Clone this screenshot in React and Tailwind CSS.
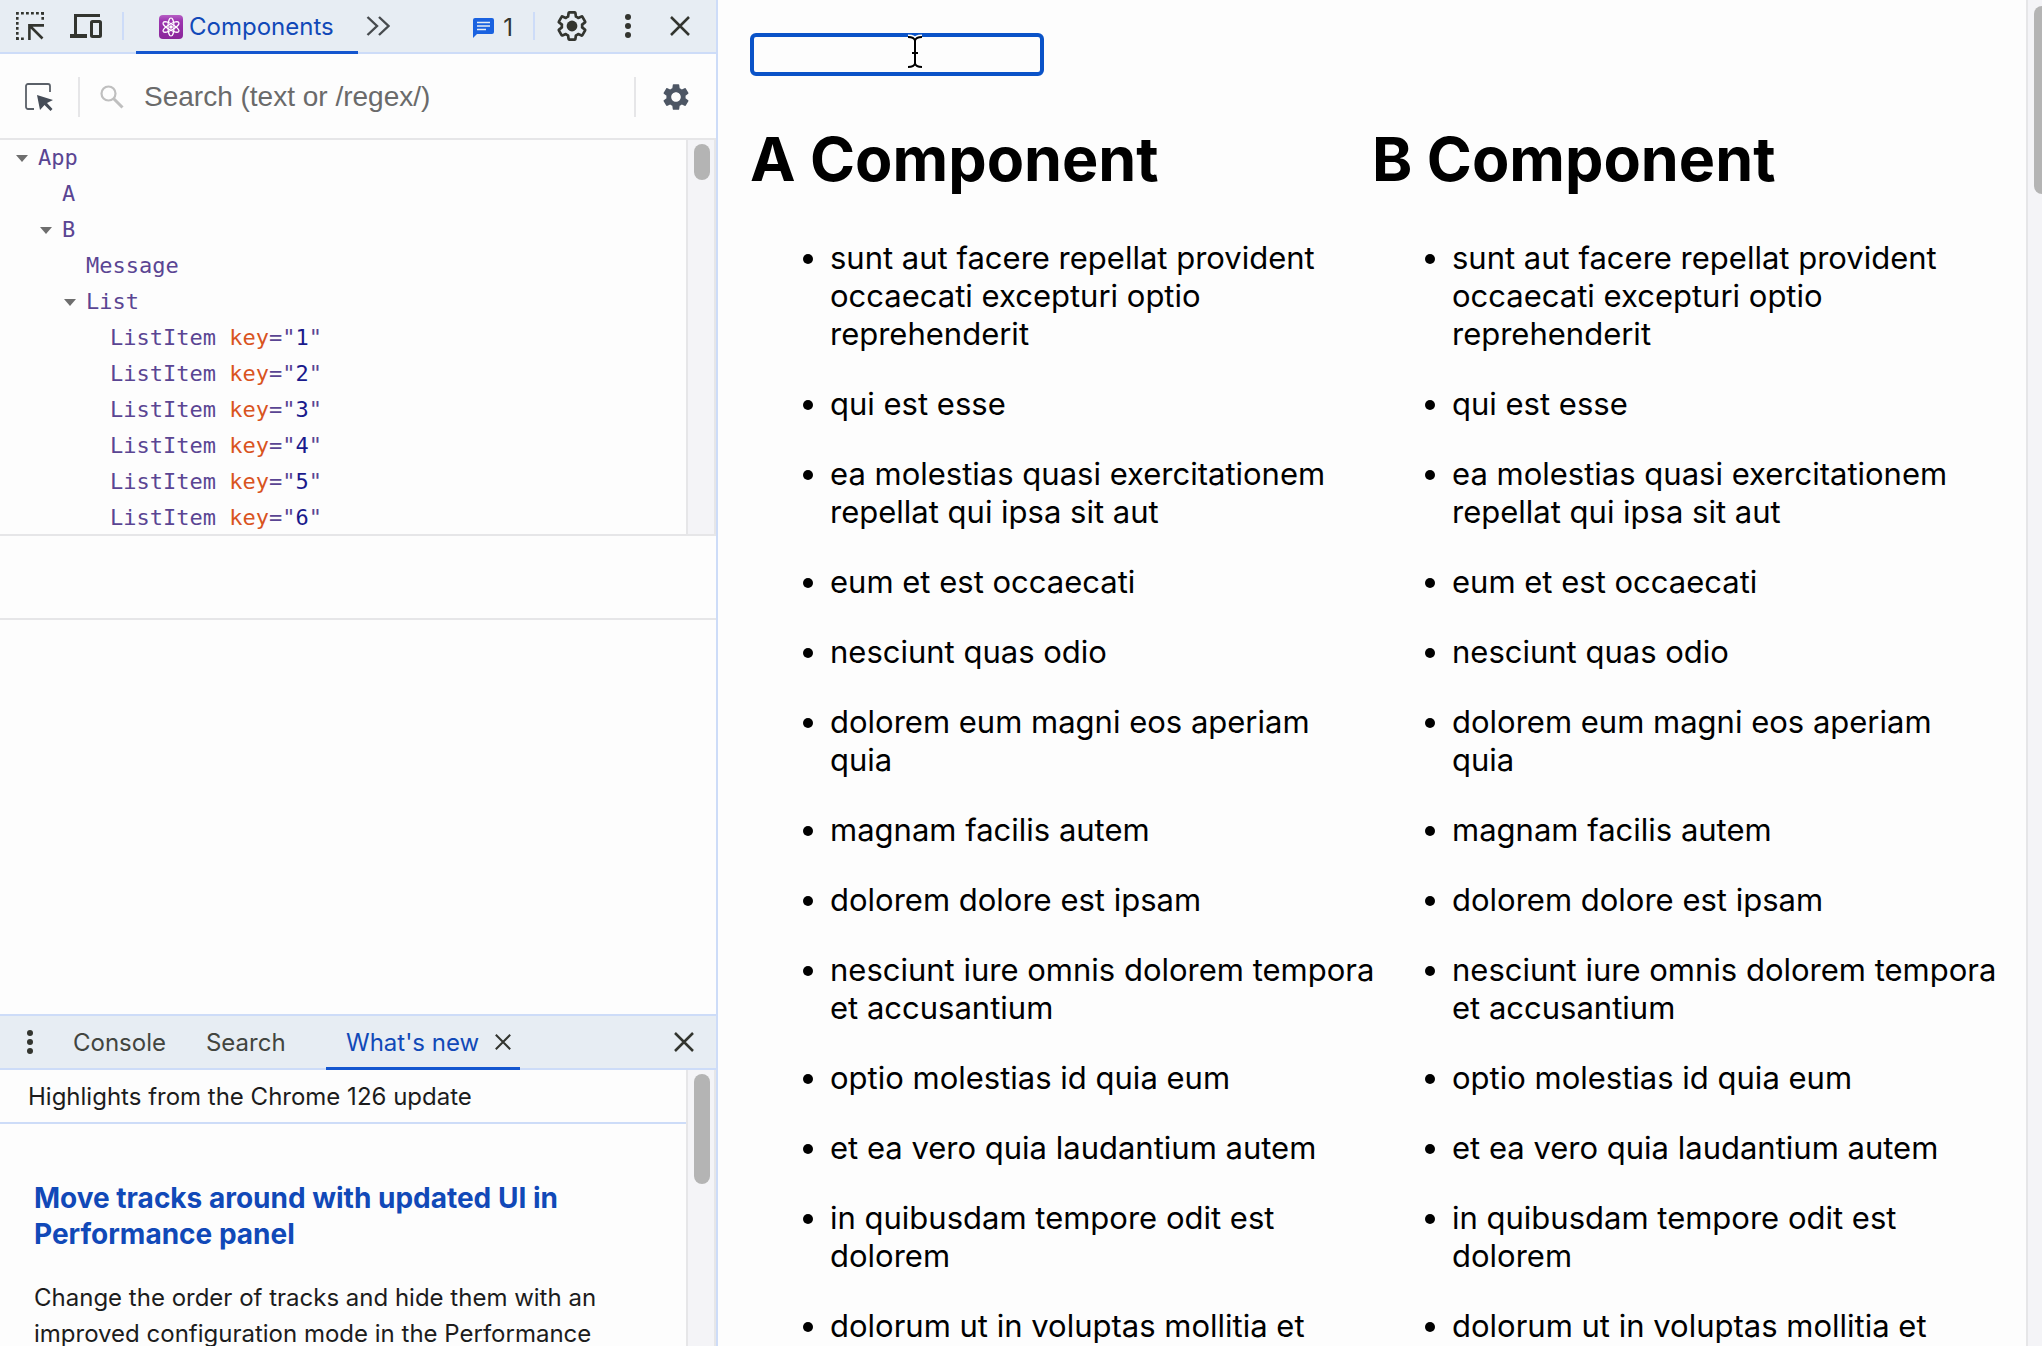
import React, { useState } from 'react';
import { MdSettings } from 'react-icons/md';

const posts = [
  'sunt aut facere repellat provident occaecati excepturi optio reprehenderit',
  'qui est esse',
  'ea molestias quasi exercitationem repellat qui ipsa sit aut',
  'eum et est occaecati',
  'nesciunt quas odio',
  'dolorem eum magni eos aperiam quia',
  'magnam facilis autem',
  'dolorem dolore est ipsam',
  'nesciunt iure omnis dolorem tempora et accusantium',
  'optio molestias id quia eum',
  'et ea vero quia laudantium autem',
  'in quibusdam tempore odit est dolorem',
  'dolorum ut in voluptas mollitia et'
];

const tree = [
  { name: 'App', open: true, indent: 'pl-4' },
  { name: 'A', indent: 'pl-10' },
  { name: 'B', open: true, indent: 'pl-10' },
  { name: 'Message', indent: 'pl-16' },
  { name: 'List', open: true, indent: 'pl-16' },
  { name: 'ListItem', id: 1, indent: 'pl-[88px]' },
  { name: 'ListItem', id: 2, indent: 'pl-[88px]' },
  { name: 'ListItem', id: 3, indent: 'pl-[88px]' },
  { name: 'ListItem', id: 4, indent: 'pl-[88px]' },
  { name: 'ListItem', id: 5, indent: 'pl-[88px]' },
  { name: 'ListItem', id: 6, indent: 'pl-[88px]' }
];

const gearPath =
  'M19.14 12.94c.04-.3.06-.61.06-.94 0-.32-.02-.64-.07-.94l2.03-1.58a.49.49 0 0 0 .12-.61l-1.92-3.32a.488.488 0 0 0-.59-.22l-2.39.96c-.5-.38-1.03-.7-1.62-.94l-.36-2.54a.484.484 0 0 0-.48-.41h-3.84c-.24 0-.43.17-.47.41l-.36 2.54c-.59.24-1.13.57-1.62.94l-2.39-.96c-.22-.08-.47 0-.59.22L2.74 8.87c-.12.21-.08.47.12.61l2.03 1.58c-.05.3-.09.63-.09.94s.02.64.07.94l-2.03 1.58a.49.49 0 0 0-.12.61l1.92 3.32c.12.22.37.29.59.22l2.39-.96c.5.38 1.03.7 1.62.94l.36 2.54c.05.24.24.41.48.41h3.84c.24 0 .44-.17.47-.41l.36-2.54c.59-.24 1.13-.56 1.62-.94l2.39.96c.22.08.47 0 .59-.22l1.92-3.32c.12-.22.07-.47-.12-.61l-2.01-1.58z';

const InspectIcon = () => (
  <svg width="28" height="28" viewBox="0 0 28 28" fill="none" stroke="#33352f" strokeWidth="2.6">
    <path d="M0 1.3H28M1.3 0V28" strokeDasharray="2.8 2.2" />
    <path d="M26.7 0V10M0 26.7H10" strokeDasharray="2.8 2.2" />
    <path d="M13.4 28V13.4H28M14 14L26.5 26.5" />
  </svg>
);

const DeviceIcon = () => (
  <svg width="32" height="24" viewBox="0 0 32 24" fill="none" stroke="#33352f">
    <path d="M30 1.5H5.5V21" strokeWidth="3" />
    <path d="M0 22H17" strokeWidth="4" />
    <rect x="21.5" y="7.5" width="9" height="15" rx="1" strokeWidth="3" />
  </svg>
);

const AtomIcon = () => (
  <svg width="24" height="24" viewBox="0 0 24 24" fill="none">
    <defs>
      <linearGradient id="atom" x1="0" y1="0" x2="0" y2="1">
        <stop offset="0" stopColor="#b65fc4" />
        <stop offset="0.25" stopColor="#9c35b0" />
        <stop offset="1" stopColor="#8a2599" />
      </linearGradient>
    </defs>
    <rect width="24" height="24" rx="4" fill="url(#atom)" />
    <g stroke="#fff" strokeWidth="1.2">
      <ellipse cx="12" cy="12" rx="3" ry="9" />
      <ellipse cx="12" cy="12" rx="3" ry="9" transform="rotate(60 12 12)" />
      <ellipse cx="12" cy="12" rx="3" ry="9" transform="rotate(120 12 12)" />
    </g>
    <circle cx="12" cy="12" r="1.8" fill="#fff" />
  </svg>
);

const ChevronsIcon = () => (
  <svg width="24" height="20" viewBox="0 0 24 20" fill="none" stroke="#474b4e" strokeWidth="2.4">
    <path d="M1.5 1L11 10L1.5 19M13 1L22.5 10L13 19" />
  </svg>
);

const MessageIcon = () => (
  <svg width="21" height="20" viewBox="0 0 21 20" fill="none">
    <path d="M2 0H19a2 2 0 0 1 2 2V14a2 2 0 0 1-2 2H4L0 20V2a2 2 0 0 1 2-2Z" fill="#1a62e0" />
    <path d="M4 4.5H17M4 8H17M4 11.5H13" stroke="#e7edf3" strokeWidth="1.6" />
  </svg>
);

const GearIcon = () => (
  <svg width="34" height="34" viewBox="0 0 24 24" fill="none">
    <path d={gearPath} stroke="#33352f" strokeWidth="1.9" strokeLinejoin="round" />
    <circle cx="12" cy="12" r="3.8" fill="#33352f" />
  </svg>
);

const DotsIcon = () => (
  <svg width="6" height="24" viewBox="0 0 6 24" fill="#33352f">
    <circle cx="3" cy="3" r="3" />
    <circle cx="3" cy="12" r="3" />
    <circle cx="3" cy="21" r="3" />
  </svg>
);

const CloseIcon = ({ size = 20 }) => (
  <svg width={size} height={size} viewBox="0 0 20 20" fill="none" stroke="#33352f" strokeWidth="2.5">
    <path d="M1 1L19 19M19 1L1 19" />
  </svg>
);

const PickIcon = () => (
  <svg width="28" height="28" viewBox="0 0 28 28" fill="none">
    <path d="M9 26H3a2 2 0 0 1-2-2V3a2 2 0 0 1 2-2H23a2 2 0 0 1 2 2V9" stroke="#5a6068" strokeWidth="1.8" />
    <path d="M12 12L28 17L22 20L27.5 26L25.5 28L19.5 22L15 27Z" fill="#454c57" />
  </svg>
);

const SearchIcon = () => (
  <svg width="24" height="24" viewBox="0 0 24 24" fill="none" stroke="#bfbfbf">
    <circle cx="8.5" cy="8.5" r="7" strokeWidth="2.2" />
    <path d="M13.5 13.5L22.5 22.5" strokeWidth="3" />
  </svg>
);

const TextCursor = () => (
  <svg width="20" height="36" viewBox="0 0 20 36" fill="none">
    <path d="M3 3Q9 3 10 6.5Q11 3 17 3M10 6V30M7 19H13M3 33Q9 33 10 29.5Q11 33 17 33" stroke="#fff" strokeWidth="5" />
    <path d="M3 3Q9 3 10 6.5Q11 3 17 3M10 6V30M7 19H13M3 33Q9 33 10 29.5Q11 33 17 33" stroke="#000" strokeWidth="2" />
  </svg>
);

const Scrollbar = ({ thumb }) => (
  <div className="w-[30px] shrink-0 border-x-2 border-[#e6e6e8] bg-[#f4f4f7] px-[6px] py-1">
    <div className={`w-4 rounded-full bg-[#b4b4b4] ${thumb}`} />
  </div>
);

const Column = ({ title }) => (
  <section className="min-w-0 flex-1">
    <h1 className="text-[61px] leading-[76px] font-bold">{title}</h1>
    {/* Items may run slightly past the column edge before they wrap */}
    <ul className="mt-[42px] -mr-[3px] flex list-disc flex-col gap-8 pl-20 text-[31px] leading-[38px]">
      {posts.map((post) => (
        <li key={post}>{post}</li>
      ))}
    </ul>
  </section>
);

const App = () => {
  const [query, setQuery] = useState('');
  const [text, setText] = useState('');

  return (
    <div className="flex h-screen overflow-hidden bg-[#fdfdfd] font-['Inter',sans-serif] text-black">
      <aside className="flex w-[718px] shrink-0 flex-col border-r-2 border-[#cddcf8] text-2xl">
        {/* Main toolbar */}
        <header className="flex h-[54px] shrink-0 items-center border-b-2 border-[#cddcf8] bg-[#e7edf3] pl-4 text-[#33352f]">
          <button aria-label="Inspect element"><InspectIcon /></button>
          <button aria-label="Toggle device toolbar" className="ml-[26px]"><DeviceIcon /></button>
          <div className="ml-5 h-7 w-[2px] bg-[#cddcf8]" />
          <button className="-mb-[2px] ml-3 flex h-[54px] w-[222px] items-center gap-[6px] border-b-[3px] border-[#1456cf] pt-[2px] pl-[23px] text-[#1149b8]">
            <AtomIcon />
            Components
          </button>
          <button aria-label="More tabs" className="ml-2"><ChevronsIcon /></button>
          <button aria-label="1 message" className="ml-auto flex items-center gap-[9px] pt-[4px]">
            <MessageIcon />
            1
          </button>
          <div className="ml-5 h-7 w-[2px] bg-[#cddcf8]" />
          <button aria-label="Settings" className="ml-5"><GearIcon /></button>
          <button aria-label="Customize" className="ml-9"><DotsIcon /></button>
          <button aria-label="Close" className="mr-[26px] ml-[39px]"><CloseIcon /></button>
        </header>

        {/* Component search */}
        <div className="flex h-[86px] shrink-0 items-center border-b-2 border-[#e6e6e8] pt-[2px] pl-[25px]">
          <button aria-label="Select an element"><PickIcon /></button>
          <div className="ml-[25px] h-10 w-[2px] bg-[#e6e6e8]" />
          <label htmlFor="search" aria-label="Search components" className="ml-5"><SearchIcon /></label>
          <input
            id="search"
            type="text"
            value={query}
            onChange={(e) => setQuery(e.target.value)}
            placeholder="Search (text or /regex/)"
            className="ml-5 min-w-0 flex-1 font-['Liberation_Sans',sans-serif] text-[28px] leading-9 outline-none placeholder:text-[#6a6a6a]"
          />
          <div className="h-10 w-[2px] bg-[#e6e6e8]" />
          <button aria-label="View settings" className="mr-6 ml-6 text-[#4d5664]"><MdSettings size={32} /></button>
        </div>

        {/* Component tree */}
        <div className="flex h-[396px] shrink-0 border-b-2 border-[#e6e6e8]">
          <ul className="min-w-0 flex-1 overflow-hidden font-['DejaVu_Sans_Mono',monospace] text-[22px] leading-9 text-[#5a4593]">
            {tree.map((node, i) => (
              <li key={i} className={`flex h-9 items-center ${node.indent}`}>
                <span className="w-[22px]">
                  {node.open && (
                    <svg width="12" height="7" viewBox="0 0 12 7" fill="#6e6e6e">
                      <path d="M0 0H12L6 7Z" />
                    </svg>
                  )}
                </span>
                <span>{node.name}</span>
                {node.id && (
                  <span className="whitespace-pre">
                    {' '}
                    <span className="text-[#d9541e]">key</span>="<span className="text-[#1a1a8c]">{node.id}</span>"
                  </span>
                )}
              </li>
            ))}
          </ul>
          <Scrollbar thumb="h-9" />
        </div>
        <div className="h-[84px] shrink-0 border-b-2 border-[#e6e6e8]" />

        {/* Drawer */}
        <div className="mt-auto flex h-[332px] shrink-0 flex-col border-t-2 border-[#cddcf8]">
          <div className="flex h-[54px] shrink-0 items-center border-b-2 border-[#cddcf8] bg-[#e7edf3] pl-[27px] text-[#42453f]">
            <button aria-label="Drawer menu"><DotsIcon /></button>
            <button className="ml-10 pt-[2px]">Console</button>
            <button className="ml-10 pt-[2px]">Search</button>
            <div className="-mb-[2px] ml-auto flex h-[54px] w-[194px] items-center gap-4 border-b-[3px] border-[#1456cf] pl-5">
              <button className="pt-[2px] whitespace-nowrap text-[#1149b8]">What's new</button>
              <button aria-label="Close What's new"><CloseIcon size={16} /></button>
            </div>
            <button aria-label="Close drawer" className="mr-[22px] ml-[154px]"><CloseIcon /></button>
          </div>
          <div className="flex min-h-0 flex-1">
            <div className="min-w-0 flex-1 overflow-hidden text-[#1c1c1c]">
              <p className="h-[54px] border-b-2 border-[#cddcf8] pl-7 leading-[54px]">
                Highlights from the Chrome 126 update
              </p>
              <div className="px-[34px] pt-14">
                <a href="#performance" className="block text-[28px] leading-9 font-bold text-[#1149b8]">
                  Move tracks around with updated UI in Performance panel
                </a>
                <p className="mt-7 leading-9">
                  Change the order of tracks and hide them with an improved configuration mode in the Performance
                </p>
              </div>
            </div>
            <Scrollbar thumb="h-[110px]" />
          </div>
        </div>
      </aside>

      {/* Page */}
      <main className="relative min-w-0 flex-1 overflow-hidden px-8 pt-[33px]">
        <input
          type="text"
          aria-label="Message"
          value={text}
          onChange={(e) => setText(e.target.value)}
          className="block h-[43px] w-[294px] rounded-md border-4 border-[#0a53c8] px-1 text-[26px] outline-none"
        />
        <div className="pointer-events-none absolute top-[34px] left-[187px]"><TextCursor /></div>
        <div className="mt-[45px] flex">
          <Column title="A Component" />
          <Column title="B Component" />
        </div>
      </main>
      <div className="w-4 shrink-0 overflow-hidden border-l-2 border-[#e6e6e8] bg-[#f4f4f7] pt-[6px] pl-[6px]">
        <div className="h-[188px] w-4 rounded-full bg-[#b4b4b4]" />
      </div>
    </div>
  );
};

export default App;
